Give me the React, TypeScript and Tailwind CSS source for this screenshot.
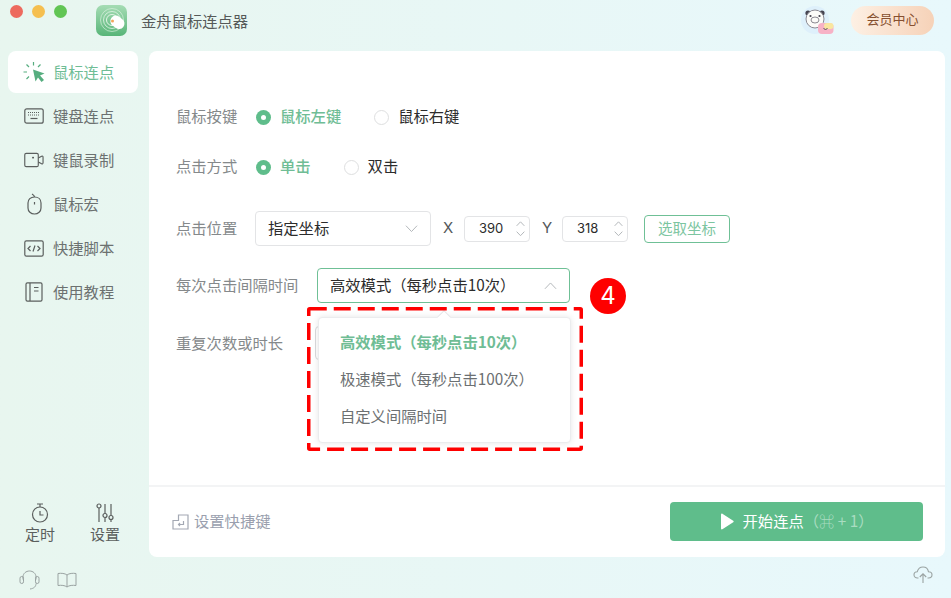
const font = 'font-["Noto_Sans_CJK_SC","Noto_Sans",sans-serif]';

function Chevron({ up, width }: { up?: boolean; width: number }) {
  return (
    <svg width={width} height={width / 2 + 1} viewBox="0 0 14 8" fill="none" stroke="#b4b8bb" strokeWidth={14 / width}>
      <path d={up ? 'M1 7.300L7 1l6 6.300' : 'M1 .700L7 7l6-6.300'} />
    </svg>
  );
}

function KeyboardIcon() {
  return (
    <svg width="20" height="16" viewBox="0 0 20 16" fill="none" stroke="#5b5f5e" strokeWidth="1.2">
      <rect x="0.8" y="0.8" width="18.4" height="14.4" rx="2" />
      <path d="M4 4.5h12M4 7h12" strokeDasharray="1 1" />
      <path d="M6.5 10.5h7" />
    </svg>
  );
}

function RecordIcon() {
  return (
    <svg width="21" height="16" viewBox="0 0 21 16" fill="none" stroke="#5b5f5e" strokeWidth="1.2">
      <rect x="0.8" y="1" width="14.2" height="14" rx="1.6" />
      <path d="M15 6l3.5-2c.8-.4 1.5 0 1.5 1v6c0 1-.7 1.400-1.500 1L15 10" />
      <path d="M9.500 4.500v2M8.500 5.500h2" />
    </svg>
  );
}

function MouseIcon() {
  return (
    <svg width="15" height="22" viewBox="0 0 15 22" fill="none" stroke="#5b5f5e" strokeWidth="1.2">
      <path d="M7.500 4C3.500 4 1 6.500 1 10v5c0 3.500 2.800 6 6.500 6s6.500-2.500 6.500-6v-5c0-3.500-2.500-6-6.500-6z" />
      <path d="M7.500 9v2.500M7.500 4c0-1.500-1-2.200-2.500-3" />
    </svg>
  );
}

function ScriptIcon() {
  return (
    <svg width="20" height="17" viewBox="0 0 20 17" fill="none" stroke="#5b5f5e" strokeWidth="1.2">
      <rect x="0.8" y="0.8" width="18.400" height="15.400" rx="1.600" />
      <path d="M6.500 6L4 8.500 6.500 11M13.500 6L16 8.500 13.500 11M11 5.500l-2 6" />
    </svg>
  );
}

function BookIcon() {
  return (
    <svg width="18" height="20" viewBox="0 0 18 20" fill="none" stroke="#5b5f5e" strokeWidth="1.2">
      <rect x="1" y="0.800" width="16" height="18.400" rx="1.400" />
      <path d="M5 1v18M9 5.500h4.500M9 9h4.500" />
    </svg>
  );
}

const navItems = [
  { label: '键盘连点', icon: <KeyboardIcon /> },
  { label: '键鼠录制', icon: <RecordIcon /> },
  { label: '鼠标宏', icon: <MouseIcon /> },
  { label: '快捷脚本', icon: <ScriptIcon /> },
  { label: '使用教程', icon: <BookIcon /> },
];

function Logo() {
  return (
    <svg width="31" height="31" viewBox="0 0 31 31">
      <defs>
        <linearGradient id="logoBg" x1="0" y1="0" x2="0" y2="1">
          <stop offset="0" stopColor="#a5dcb4" />
          <stop offset="1" stopColor="#58b578" />
        </linearGradient>
      </defs>
      <rect width="31" height="31" rx="7" fill="url(#logoBg)" />
      <g fill="none" stroke="#e4f5e8" strokeWidth="1">
        <circle cx="16" cy="15" r="11.500" opacity="0.6" />
        <circle cx="16" cy="15" r="8.500" opacity="0.8" />
        <circle cx="16" cy="15" r="5.500" />
      </g>
      <rect x="14" y="11.500" width="15" height="11" rx="5.500" fill="#fff" transform="rotate(38 21 17)" />
      <circle cx="16.500" cy="16" r="1.500" fill="#f2a65a" />
    </svg>
  );
}

function Mascot() {
  return (
    <svg width="34" height="32" viewBox="0 0 34 32">
      <circle cx="15" cy="16" r="14" fill="#def0fb" />
      <circle cx="8" cy="9" r="2.600" fill="#45434f" />
      <circle cx="22" cy="9" r="2.600" fill="#45434f" />
      <circle cx="15" cy="15" r="9" fill="#fbfbf8" stroke="#8b8991" strokeWidth="1" />
      <ellipse cx="15" cy="16" rx="4" ry="3" fill="none" stroke="#8b8991" strokeWidth="1" />
      <circle cx="10.500" cy="12" r="1.100" fill="#45434f" />
      <circle cx="19.500" cy="12" r="1.100" fill="#45434f" />
      <rect x="18" y="19" width="15.500" height="11" rx="4" fill="#f7b2c6" />
      <rect x="24" y="19" width="9.500" height="6" rx="3" fill="#f9e6a0" />
      <path d="M23.500 24l2 2 2-2" fill="none" stroke="#555" strokeWidth="1" />
    </svg>
  );
}

function Radio({ checked, label }: { checked?: boolean; label: string }) {
  return (
    <div className="flex items-center gap-[9px]">
      {checked ? (
        <span className="flex h-[15px] w-[15px] items-center justify-center rounded-full bg-[#5fbd8b]">
          <span className="h-[5px] w-[5px] rounded-full bg-white" />
        </span>
      ) : (
        <span className="h-[15px] w-[15px] rounded-full border border-[#dedfe0] bg-white" />
      )}
      <span className={checked ? 'pb-[4px] text-[15.3px] font-medium text-[#6fbd95]' : 'pb-[4px] text-[15.3px] text-[#2c2c2c]'}>
        {label}
      </span>
    </div>
  );
}

function NumberBox({ value }: { value: string }) {
  return (
    <div className="flex h-[26px] w-[66px] items-center justify-between rounded border border-[#e3e4e6] pl-[13px] pr-[4px]">
      <span className="pl-px font-['Inter',sans-serif] text-[13px] text-[#2c2c2c]">{value}</span>
      <div className="flex flex-col gap-[4px]">
        <Chevron up width={9} />
        <Chevron width={9} />
      </div>
    </div>
  );
}

export default function App() {
  return (
    <div className={`flex h-[598px] w-[951px] flex-col overflow-hidden bg-linear-to-r from-[#e8f6ef] to-[#e8f8fc] ${font}`}>
      <header className="flex h-[51px] shrink-0 items-start pl-[10px] pr-[17px]">
        <div className="mt-[5px] flex gap-[9px]">
          <span className="h-[13px] w-[13px] rounded-full bg-[#ed6a5e]" />
          <span className="h-[13px] w-[13px] rounded-full bg-[#f5bf4f]" />
          <span className="h-[13px] w-[13px] rounded-full bg-[#61c554]" />
        </div>
        <div className="ml-[29px] mt-[5px]">
          <Logo />
        </div>
        <span className="ml-[14px] mt-[8px] text-[15.3px] leading-[24px] text-[#555958]">金舟鼠标连点器</span>
        <div className="ml-auto mt-[4px] flex items-center gap-[17px]">
          <Mascot />
          <button className="flex h-[29px] w-[83px] items-center justify-center rounded-full bg-linear-to-r from-[#fdf0e4] to-[#f6d2b8] pb-[2px] text-[13px] text-[#86502f]">
            会员中心
          </button>
        </div>
      </header>

      <div className="flex h-[506px] shrink-0 pr-[6px]">
        <aside className="flex w-[149px] shrink-0 flex-col justify-between">
          <nav className="flex flex-col pl-[8px] pr-[11px]">
            <div className="flex h-[42px] items-center gap-[5px] rounded-lg bg-white pl-[15px]">
              <svg width="25" height="22" viewBox="0 0 25 22" fill="none" stroke="#56ad7f" strokeWidth="1.200">
                <path d="M10.500 1v3.500M3.500 3.500l2.500 2.500M17.500 3.500L15 6M0.500 11h3.500M3.500 18l2.500-2.500" />
                <path d="M10 8.500l11.500 4-4.500 2 4 4.500-2.500 2-3.500-4.500-2.500 4z" fill="#56ad7f" stroke="none" />
              </svg>
              <span className="pb-[2px] text-[15.3px] text-[#6fbd95]">鼠标连点</span>
            </div>
            {navItems.map((item) => (
              <div key={item.label} className="mt-[2px] flex h-[42px] items-center">
                <span className="flex w-[36px] shrink-0 justify-center pl-[16px] pr-0">
                  <span className="flex w-[20px] justify-center">{item.icon}</span>
                </span>
                <span className="ml-[9px] pb-[2px] text-[15.3px] text-[#6c7170]">{item.label}</span>
              </div>
            ))}
          </nav>
          <div className="flex justify-between pb-[13px] pl-[25px] pr-[29px]">
            <div className="flex flex-col items-center">
              <svg width="18" height="20" viewBox="0 0 18 20" fill="none" stroke="#5b5f5e" strokeWidth="1.200">
                <circle cx="9" cy="11.500" r="7.500" />
                <path d="M6 1h6M9 1v3M9 8v4h3.500" />
              </svg>
              <span className="mt-[1px] text-[15px] leading-[20px] text-[#5b5f5e]">定时</span>
            </div>
            <div className="flex flex-col items-center">
              <svg width="18" height="20" viewBox="0 0 18 20" fill="none" stroke="#5b5f5e" strokeWidth="1.200">
                <path d="M3 5v14M9 1v9.500M9 15v4M15 1v11.500M15 16.500v2.500" />
                <circle cx="3" cy="3" r="2" />
                <circle cx="9" cy="12.500" r="2" />
                <circle cx="15" cy="14.500" r="2" />
              </svg>
              <span className="mt-[1px] text-[15px] leading-[20px] text-[#5b5f5e]">设置</span>
            </div>
          </div>
        </aside>

        <main className="relative flex min-w-0 flex-1 flex-col rounded-lg bg-white">
          <div className="flex-1 pl-[27px] pt-[51px]">
            <div className="flex h-[30px] items-center">
              <span className="w-[80px] pb-[4px] text-[15.3px] text-[#85898b]">鼠标按键</span>
              <Radio checked label="鼠标左键" />
              <div className="ml-[33px]">
                <Radio label="鼠标右键" />
              </div>
            </div>
            <div className="mt-[20px] flex h-[30px] items-center">
              <span className="w-[80px] pb-[4px] text-[15.3px] text-[#85898b]">点击方式</span>
              <Radio checked label="单击" />
              <div className="ml-[33px]">
                <Radio label="双击" />
              </div>
            </div>
            <div className="mt-[29px] flex h-[35px] items-center">
              <span className="w-[79px] pb-[2px] text-[15.3px] text-[#85898b]">点击位置</span>
              <div className="flex h-[35px] w-[176px] items-center justify-between rounded border border-[#e3e4e6] pl-[12px] pr-[12px]">
                <span className="pb-[2px] text-[15.3px] text-[#2c2c2c]">指定坐标</span>
                <Chevron width={13} />
              </div>
              <span className="ml-[12px] w-[21px] font-['Inter',sans-serif] text-[15px] text-[#55595b]">X</span>
              <NumberBox value="390" />
              <span className="ml-[12px] w-[21px] font-['Inter',sans-serif] text-[15px] text-[#55595b]">Y</span>
              <div className="-ml-px">
                <NumberBox value="318" />
              </div>
              <button className="ml-[16px] h-[28px] w-[86px] rounded border border-[#6fc096] pb-[2px] text-[14.5px] text-[#7cc5a0]">
                选取坐标
              </button>
            </div>
            <div className="mt-[22px] flex h-[35px] items-center">
              <span className="w-[141px] pb-[2px] text-[15.3px] text-[#85898b]">每次点击间隔时间</span>
              <div className="flex h-[35px] w-[253px] items-center justify-between rounded border border-[#6fc096] pl-[12px] pr-[12px]">
                <span className="pb-[2px] text-[15.3px] text-[#2c2c2c]">高效模式（每秒点击10次）</span>
                <Chevron up width={13} />
              </div>
            </div>
            <div className="mt-[23px] flex h-[34px] items-center">
              <span className="w-[139px] pb-[2px] text-[15.3px] text-[#85898b]">重复次数或时长</span>
              <div className="h-[34px] w-[60px] rounded border border-[#d9dadc]" />
            </div>
          </div>

          <footer className="flex h-[72px] shrink-0 items-center justify-between border-t-2 border-[#f3f4f5] pb-px pl-[23px] pr-[22px]">
            <div className="flex items-center gap-[5px]">
              <svg width="17" height="16" viewBox="0 0 17 16" fill="none" stroke="#a3a8b3" strokeWidth="1.200">
                <path d="M1 6.500h5.500V1H16v14H1z" />
                <path d="M11.500 7v3.500H6.500M8 9l-1.500 1.500L8 12" />
              </svg>
              <span className="pb-[2px] text-[15.3px] text-[#9a9fae]">设置快捷键</span>
            </div>
            <button className="flex h-[39px] w-[253px] items-center justify-center rounded bg-[#5fbd8b] text-[15.3px] text-white">
              <svg width="14" height="17" viewBox="0 0 14 17" fill="#fff" className="mr-[9px]">
                <path d="M1 1.500c0-.800.800-1.200 1.400-.800l10.800 7c.6.400.6 1.200 0 1.600l-10.800 7c-.6.400-1.400 0-1.400-.800z" />
              </svg>
              <span className="pb-[2px]">开始连点</span>
              <span className="pb-[2px] text-[#a9dcc1]">（⌘ + 1）</span>
            </button>
          </footer>

          {/* open dropdown, sits over the row below */}
          <div className="absolute left-[169px] top-[266px] h-[126px] w-[253px] rounded border border-[#ebecee] bg-white shadow-[0_0_6px_rgba(0,0,0,0.1)]">
            <span className="absolute left-[120px] top-[-6px] h-[10px] w-[10px] rotate-45 border-l border-t border-[#e6e7e9] bg-white" />
            <ul className="flex flex-col pt-[6px] text-[15.3px] text-[#6c7072]">
              <li className="flex h-[37px] items-center pb-[2px] pl-[21px] font-semibold text-[#6fbd95]">高效模式（每秒点击10次）</li>
              <li className="flex h-[37px] items-center pb-[2px] pl-[21px]">极速模式（每秒点击100次）</li>
              <li className="flex h-[37px] items-center pb-[2px] pl-[21px]">自定义间隔时间</li>
            </ul>
          </div>
          {/* annotation overlay */}
          <svg width="276" height="144" viewBox="0 0 276 144" fill="none" className="absolute left-[158px] top-[256px]">
            <rect x="1.750" y="1.750" width="272.500" height="140.500" rx="1" stroke="#fe0000" strokeWidth="3.500" strokeDasharray="17 7" strokeLinecap="butt" />
          </svg>
          <div className="absolute left-[441px] top-[227px] flex h-[36px] w-[36px] items-center justify-center rounded-full bg-[#fe0000] font-['Inter',sans-serif] text-[24px] text-white">
            4
          </div>
        </main>
      </div>

      <div className="flex flex-1 items-start justify-between pl-[19px] pr-[18px] pt-[13px]">
        <div className="flex items-center gap-[17px]">
          <svg width="21" height="20" viewBox="0 0 21 20" fill="none" stroke="#9aa3a2" strokeWidth="1">
            <path d="M4 9.500V7c0-3.500 3-6 6.500-6S17 3.500 17 7v2.500" />
            <rect x="1" y="6.500" width="3.500" height="7" rx="1.700" />
            <rect x="16.500" y="6.500" width="3.500" height="7" rx="1.700" />
            <path d="M17 13.500c0 3-2 5-6 5.500" />
          </svg>
          <svg width="20" height="16" viewBox="0 0 20 16" fill="none" stroke="#9aa3a2" strokeWidth="1">
            <path d="M10 3C8 1.300 4 1 1 1.500v12c3-.5 7-.2 9 1.500 2-1.700 6-2 9-1.500v-12C16 1 12 1.300 10 3zM10 3v12" />
          </svg>
        </div>
        <svg width="20" height="18" viewBox="0 0 20 18" fill="none" stroke="#9aa3a2" strokeWidth="1.100" className="-mt-[4px]">
          <path d="M5.500 12H4.500C2.500 12 1 10.500 1 8.800c0-1.800 1.400-3 3.200-3C5 3 7 1 10 1c3 0 5 2 5.500 4.800 2 0 3.500 1.300 3.500 3 0 1.800-1.500 3.200-3.500 3.200h-1" />
          <path d="M10 17V8M6.800 11L10 7.800 13.200 11" />
        </svg>
      </div>
    </div>
  );
}
